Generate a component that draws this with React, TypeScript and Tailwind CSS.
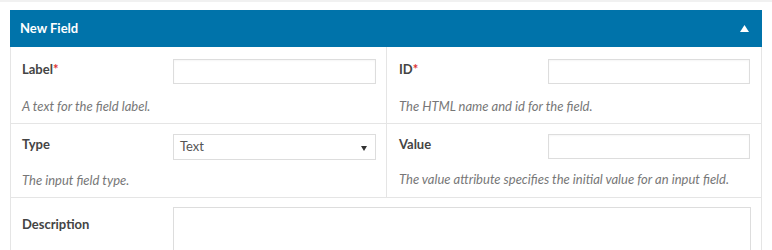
import React from 'react';

const font = { fontFamily: 'Lato, "Liberation Sans", sans-serif' };

interface CellProps {
  label: string;
  required?: boolean;
  description: string;
  children: React.ReactNode;
  left?: boolean;
  top: string;
  gap: string;
}

const Cell: React.FC<CellProps> = ({ label, required, description, children, left, top, gap }) => (
  <div className={(left ? 'pl-[11px] pr-[10px] border-r border-[#e5e5e5] ' : 'pl-[12px] pr-[11px] ') + top + ' pb-[8px]'}>
    <div className="flex items-start">
      <div className={(left ? 'w-[151px]' : 'w-[149px]') + ' shrink-0 pt-[1px] text-[13px] leading-[18px]'}>
        <span className="font-bold text-[#444]">
          {label}
          {required && <span className="text-[#dc3232]">*</span>}
        </span>
      </div>
      <div className="flex-1">{children}</div>
    </div>
    <p className={gap + ' text-[13px] italic text-[#777] leading-[18px]'}>{description}</p>
  </div>
);

const TextInput: React.FC = () => (
  <input type="text" className="block w-full h-[25px] border border-[#ddd] bg-white outline-none shadow-[inset_0_1px_2px_rgba(0,0,0,0.04)]" />
);

const App: React.FC = () => {
  return (
    <div className="w-[772px] h-[250px] bg-white border-t-2 border-[#f1f1f1] overflow-hidden" style={font}>
      <div className="ml-[10px] mt-[8px] w-[752px]">
        {/* Cabecera */}
        <div className="h-[37px] bg-[#0073aa] flex items-center justify-between pl-[10px] pr-[13px]">
          <span className="text-[13px] font-bold text-white">New Field</span>
          <svg width="9" height="7" viewBox="0 0 9 7">
            <polygon points="4.5,0 9,7 0,7" fill="#ffffff" />
          </svg>
        </div>

        <div className="border-l border-r border-[#e5e5e5]">
          <div className="grid grid-cols-[376px_1fr] border-b border-[#e5e5e5]">
            <Cell left top="pt-[12px]" gap="mt-[13px]" label="Label" required description="A text for the field label.">
              <TextInput />
            </Cell>
            <Cell top="pt-[12px]" gap="mt-[13px]" label="ID" required description="The HTML name and id for the field.">
              <TextInput />
            </Cell>
          </div>

          <div className="grid grid-cols-[376px_1fr] border-b border-[#e5e5e5]">
            <Cell left top="pt-[10px]" gap="mt-[11px]" label="Type" description="The input field type.">
              <div className="relative h-[26px] border border-[#ddd] bg-white flex items-center pl-[6px]">
                <span className="text-[13px] text-[#555]">Text</span>
                <svg className="absolute right-[8px] top-[11px]" width="6" height="5" viewBox="0 0 6 5">
                  <polygon points="0,0 6,0 3,5" fill="#333" />
                </svg>
              </div>
            </Cell>
            <Cell top="pt-[10px]" gap="mt-[11px]" label="Value" description="The value attribute specifies the initial value for an input field.">
              <TextInput />
            </Cell>
          </div>

          <div className="flex items-start pl-[11px] pr-[10px] pt-[9px]">
            <div className="w-[151px] shrink-0 pt-[8px] text-[13px] leading-[18px]">
              <span className="font-bold text-[#444]">Description</span>
            </div>
            <textarea className="flex-1 h-[60px] border border-[#ddd] bg-white outline-none resize-y" />
          </div>
        </div>
      </div>
    </div>
  );
};

export default App;
